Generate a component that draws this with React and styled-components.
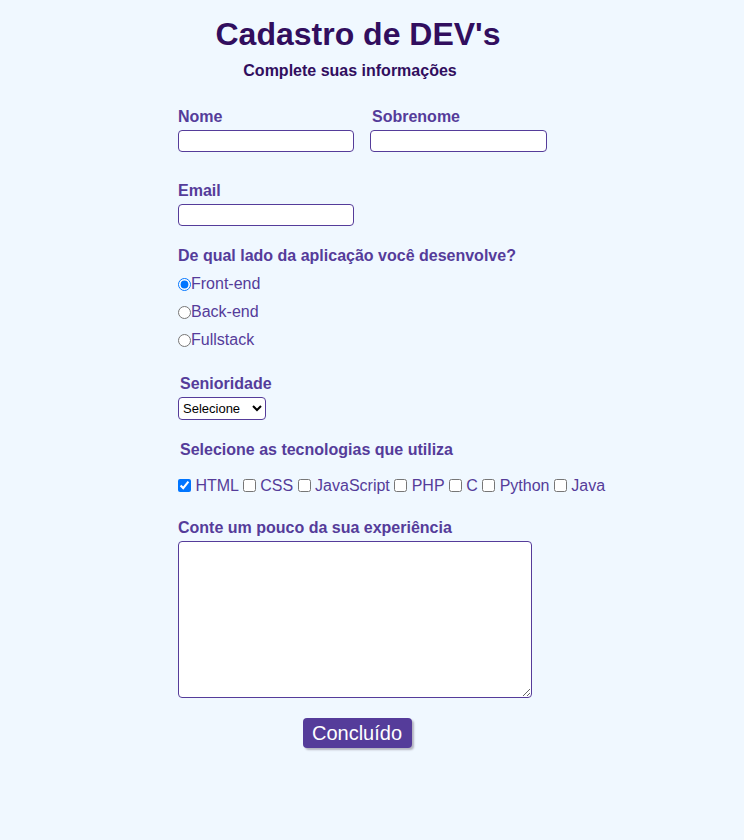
import React from "react";
import styled, { createGlobalStyle } from "styled-components";

const techs = ["HTML", "CSS", "JavaScript", "PHP", "C", "Python", "Java"];

const App = () => {
  return (
    <>
      <GlobalStyle />
      <Page>
        <Form onSubmit={(e) => e.preventDefault()}>
          <Title>Cadastro de DEV's</Title>
          <Subtitle>Complete suas informações</Subtitle>

          <Row>
            <Field>
              <Label>Nome</Label>
              <Input type="text" />
            </Field>
            <Field>
              <Label $indent={2}>Sobrenome</Label>
              <Input type="text" $width={177} />
            </Field>
          </Row>

          <Field $top={30}>
            <Label>Email</Label>
            <Input type="email" />
          </Field>

          <Label $top={21} $bottom={5}>
            De qual lado da aplicação você desenvolve?
          </Label>
          <Radios>
            <RadioLine>
              <Radio type="radio" name="lado" defaultChecked />
              Front-end
            </RadioLine>
            <RadioLine>
              <Radio type="radio" name="lado" />
              Back-end
            </RadioLine>
            <RadioLine>
              <Radio type="radio" name="lado" />
              Fullstack
            </RadioLine>
          </Radios>

          <Label $top={21} $indent={2}>
            Senioridade
          </Label>
          <Select defaultValue="">
            <option value="">Selecione</option>
            <option value="junior">Júnior</option>
            <option value="pleno">Pleno</option>
            <option value="senior">Sênior</option>
          </Select>

          <Label $top={21} $indent={2} $bottom={5}>
            Selecione as tecnologias que utiliza
          </Label>
          <Checks>
            {techs.map((t) => (
              <React.Fragment key={t}>
                <Check type="checkbox" defaultChecked={t === "HTML"} />
                {" " + t + " "}
              </React.Fragment>
            ))}
          </Checks>

          <Label $top={24}>Conte um pouco da sua experiência</Label>
          <TextArea />

          <ButtonWrap>
            <Button type="submit">Concluído</Button>
          </ButtonWrap>
        </Form>
      </Page>
    </>
  );
};

export default App;

const GlobalStyle = createGlobalStyle`
  html, body {
    margin: 0;
    background-color: #f0f8ff;
    font-family: "Liberation Sans", Arial, sans-serif;
  }
`;

const Page = styled.div`
  min-height: 840px;
  background-color: #f0f8ff;
  padding: 16px 0 0 178px;
  box-sizing: border-box;
`;

const Form = styled.form`
  width: 360px;
  display: flex;
  flex-direction: column;
  align-items: flex-start;
`;

const Title = styled.h1`
  align-self: stretch;
  margin: 0;
  text-align: center;
  font-size: 32px;
  font-weight: 700;
  line-height: 37px;
  color: #310e5e;
`;

const Subtitle = styled.h3`
  align-self: stretch;
  margin: 9px 16px 0 0;
  text-align: center;
  font-size: 16px;
  font-weight: 700;
  line-height: 18px;
  color: #310e5e;
`;

const Row = styled.div`
  display: flex;
  gap: 16px;
  margin-top: 28px;
`;

const Field = styled.div`
  display: flex;
  flex-direction: column;
  margin-top: ${(p) => p.$top || 0}px;
`;

const Label = styled.label`
  display: block;
  margin: ${(p) => p.$top || 0}px 0 ${(p) => p.$bottom ?? 4}px
    ${(p) => p.$indent || 0}px;
  font-size: 16px;
  font-weight: 700;
  line-height: 18px;
  color: #553c9a;
`;

const Input = styled.input`
  box-sizing: border-box;
  width: ${(p) => p.$width || 176}px;
  height: 22px;
  margin: 0;
  border: 1px solid #553c9a;
  border-radius: 4px;
  background: #fff;
  font-family: inherit;
`;

const Radios = styled.div`
  display: flex;
  flex-direction: column;
`;

const RadioLine = styled.label`
  display: flex;
  align-items: center;
  height: 28px;
  font-size: 16px;
  color: #553c9a;
`;

const Radio = styled.input`
  width: 13px;
  height: 13px;
  margin: 0;
`;

const Select = styled.select`
  box-sizing: border-box;
  width: 88px;
  height: 23px;
  margin: 0;
  border: 1px solid #553c9a;
  border-radius: 4px;
  background: #fff;
  color: #000;
  font-family: inherit;
  font-size: 13px;
`;

const Checks = styled.div`
  margin-top: 13px;
  font-size: 16px;
  line-height: 18px;
  color: #553c9a;
  white-space: nowrap;
`;

const Check = styled.input`
  width: 13px;
  height: 13px;
  margin: 0;
  vertical-align: -1px;
`;

const TextArea = styled.textarea`
  box-sizing: border-box;
  width: 354px;
  height: 157px;
  margin: 0;
  border: 1px solid #553c9a;
  border-radius: 4px;
  background: #fff;
`;

const ButtonWrap = styled.div`
  align-self: stretch;
  display: flex;
  justify-content: center;
  margin-top: 20px;
  padding-right: 2px;
`;

const Button = styled.button`
  box-sizing: border-box;
  width: 109px;
  height: 30px;
  border: none;
  border-radius: 4px;
  background-color: #553c9a;
  color: #fff;
  font-family: inherit;
  font-size: 20px;
  box-shadow: 2px 2px 2px #b4b4c0;
  cursor: pointer;
`;
